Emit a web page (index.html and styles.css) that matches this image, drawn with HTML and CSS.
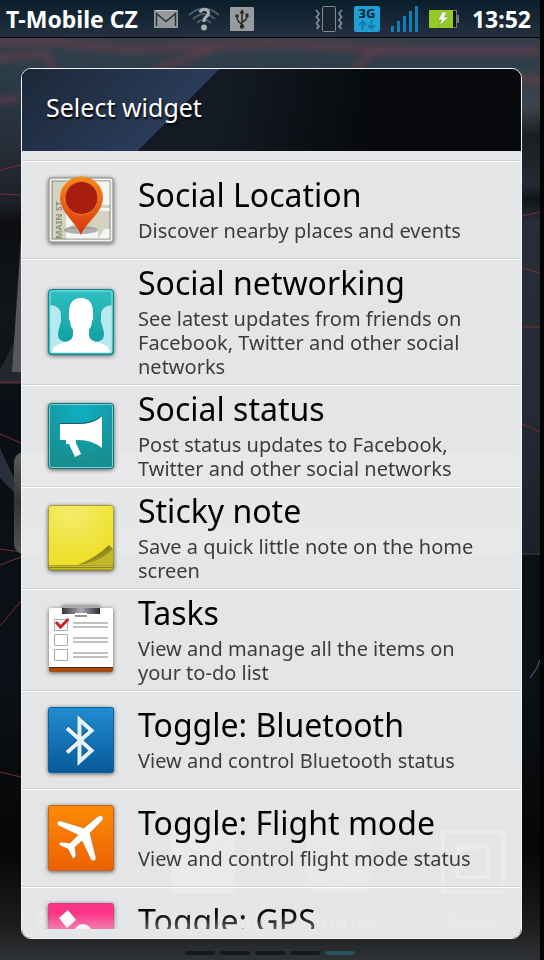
FILE: index.html
```html
<!DOCTYPE html>
<html lang="en">
<head>
    <meta charset="UTF-8">
    <meta name="viewport" content="width=device-width, initial-scale=1">
    <title>Select widget</title>
    <link rel="stylesheet" href="styles.css">
</head>
<body>
    <div class="screen">
        <!-- wallpaper -->
        <svg class="wallpaper" viewBox="0 0 540 922" preserveAspectRatio="none" aria-hidden="true">
            <defs>
                <linearGradient id="sky" x1="0" y1="0" x2="0" y2="1">
                    <stop offset="0" stop-color="#36404c"/>
                    <stop offset=".04" stop-color="#2b3c49"/>
                    <stop offset=".13" stop-color="#252b35"/>
                    <stop offset=".18" stop-color="#1b1f26"/>
                    <stop offset=".2" stop-color="#0c0e11"/>
                    <stop offset=".3" stop-color="#12161b"/>
                    <stop offset=".4" stop-color="#0b1016"/>
                    <stop offset=".7" stop-color="#0c1117"/>
                    <stop offset=".88" stop-color="#060606"/>
                    <stop offset=".96" stop-color="#1a1b1c"/>
                    <stop offset="1" stop-color="#303336"/>
                </linearGradient>
                <linearGradient id="side" x1="0" y1="0" x2="0" y2="1">
                    <stop offset="0" stop-color="#343f4a"/>
                    <stop offset=".08" stop-color="#3c434b"/>
                    <stop offset=".14" stop-color="#1a1e24"/>
                    <stop offset=".24" stop-color="#242a32"/>
                    <stop offset=".27" stop-color="#11151a"/>
                    <stop offset=".32" stop-color="#282e37"/>
                    <stop offset=".7" stop-color="#242b34"/>
                    <stop offset="1" stop-color="#1a2027"/>
                </linearGradient>
                <linearGradient id="card" x1="0" y1="0" x2="0" y2="1">
                    <stop offset="0" stop-color="#5c5c5c"/>
                    <stop offset=".5" stop-color="#333"/>
                    <stop offset="1" stop-color="#555"/>
                </linearGradient>
                <filter id="soft"><feGaussianBlur stdDeviation="3"/></filter>
            </defs>
            <rect width="540" height="922" fill="url(#sky)"/>
            <rect x="510" y="30" width="30" height="486" fill="url(#side)"/>
            <g filter="url(#soft)" fill="none" stroke="#713c48" stroke-width="7" opacity=".6">
                <path d="M-10 4H60L130 12L270 5L400 13H550"/>
                <path d="M-10 22L45 16L55 34M150 34L220 8M350 36L370 16L405 10M520 42H550M-10 64L20 60"/>
            </g>
            <path d="M0 332L21 290V346H0z" fill="#24282e"/>
            <path d="M12 334L21 200V334z" fill="#55585c"/>
            <path d="M0 410Q14 442 21 450V462L0 440z" fill="#27303b"/>
            <g fill="none" stroke="#762d33" stroke-width="1">
                <path d="M0 132L21 127M0 156L21 157M0 344H21M0 396L21 405M0 511L21 514M0 527L21 519M0 588L21 563M0 734L21 739"/>
                <path d="M522 178L540 174M522 230L540 235M522 289H540M522 386L540 394"/>
            </g>
            <rect x="14" y="414" width="506" height="102" rx="10" fill="url(#card)"/>
            <path d="M522 516H540" stroke="#3b4249"/>
            <path d="M530 640Q538 630 540 622" stroke="#667" fill="none"/>
        </svg>

        <!-- shortcuts under the dialog -->
        <div class="dock" aria-hidden="true">
            <div class="shortcut">
                <svg width="64" height="64" viewBox="0 0 64 64"></svg>
                <span>Phone</span>
            </div>
            <div class="shortcut">
                <svg width="64" height="64" viewBox="0 0 64 64">
                    <rect width="64" height="64" fill="#777"/>
                    <path d="M4 6L32 30L60 6" fill="none" stroke="#444" stroke-width="3"/>
                </svg>
                <span>Messaging</span>
            </div>
            <div class="shortcut">
                <svg width="64" height="64" viewBox="0 0 64 64">
                    <rect width="64" height="64" fill="#555"/>
                    <circle cx="32" cy="32" r="18" fill="none" stroke="#333" stroke-width="6"/>
                </svg>
                <span>Settings</span>
            </div>
            <div class="shortcut">
                <svg width="64" height="64" viewBox="0 0 64 64">
                    <path d="M2 2H62V62H2zM17 17H47V47H17z" fill="none" stroke="#999" stroke-width="4"/>
                </svg>
                <span>Apps</span>
            </div>
        </div>

        <header class="status-bar">
            <span class="carrier">T-Mobile CZ</span>
            <div class="icons left">
                <svg width="24" height="18" viewBox="0 0 24 18" role="img" aria-label="Mail">
                    <rect width="24" height="18" fill="#96989a"/>
                    <path d="M2.500 16V3.500L12 11.500L21.500 3.500V16" fill="none" stroke="#26313d" stroke-width="1.500"/>
                    <path d="M2 .5H22" stroke="#c9cacb"/>
                </svg>
                <svg width="32" height="24" viewBox="0 0 32 24" role="img" aria-label="Wi-Fi">
                    <g fill="none" stroke="#4f5b66" stroke-width="2">
                        <path d="M1 8Q16-5 31 8"/>
                        <path d="M5 12Q16 2 27 12"/>
                        <path d="M9 16Q16 9 23 16"/>
                    </g>
                    <path d="M12 5.500Q13 2.500 16.500 2.500Q20.500 2.500 20.500 6Q20.500 8.500 18 10Q16 11.500 16 15" fill="none" stroke="#aaaeb2" stroke-width="3"/>
                    <circle cx="16" cy="20.500" r="3" fill="#aaaeb2"/>
                </svg>
                <svg width="24" height="24" viewBox="0 0 24 24" role="img" aria-label="USB">
                    <rect width="24" height="24" rx="1" fill="#989a9b"/>
                    <path d="M12 5V20M12 17Q7 15 7 9.500M12 15Q17 13 17 9" fill="none" stroke="#27292b" stroke-width="1.500"/>
                    <path d="M12 2L14.500 6.500H9.500z" fill="#27292b"/>
                    <circle cx="7" cy="9" r="1.800" fill="#27292b"/>
                    <rect x="15.500" y="6.500" width="3" height="3.500" fill="#27292b"/>
                    <circle cx="12" cy="19.500" r="2.200" fill="#27292b"/>
                </svg>
            </div>
            <div class="icons">
                <svg width="28" height="26" viewBox="0 0 28 26" role="img" aria-label="Vibrate">
                    <rect x="7.500" y=".5" width="13" height="25" rx="1" fill="#1a2532" stroke="#85888c"/>
                    <path d="M1 4L4 7.500L1.500 11L4 14L1.500 17.500L4 20.500L1.500 23M27 4L24 7.500L26.500 11L24 14L26.500 17.500L24 20.500L26.500 23" fill="none" stroke="#85888c" stroke-width="1.800"/>
                </svg>
                <div class="data">
                    <span>3G</span>
                    <svg width="18" height="10" viewBox="0 0 18 10" aria-hidden="true">
                        <path d="M4.500 10V2M1 5L4.500 1.500L8 5M13.500 0V8M10 5L13.500 8.500L17 5" fill="none" stroke="#167aa8" stroke-width="2"/>
                    </svg>
                </div>
                <svg width="27" height="26" viewBox="0 0 27 26" role="img" aria-label="Signal">
                    <path d="M0 20H3V26H0zM6 15H9V26H6zM12 10H15V26H12zM18 5H21V26H18zM24 0H27V26H24z" fill="#147db8"/>
                </svg>
                <svg width="30" height="18" viewBox="0 0 30 18" role="img" aria-label="Charging">
                    <rect x="23.500" y=".5" width="4" height="17" fill="#16110f" stroke="#777"/>
                    <rect x="28" y="5" width="2" height="8" fill="#777"/>
                    <rect width="24" height="18" rx="1" fill="#94cb27"/>
                    <path d="M13 2H18L15.500 7H20L10 16L12.500 10H9z" fill="#f4f7e6" stroke="#5c8a1c" stroke-width=".5"/>
                </svg>
            </div>
            <time class="clock">13:52</time>
        </header>

        <main class="dialog">
            <h1 class="dialog-title">Select widget</h1>
            <div class="list-wrap">
                <ul class="widget-list">
                    <li>
                        <button class="widget" type="button">
                            <svg class="icon" viewBox="0 0 66 66" aria-hidden="true">
                                <defs>
                                    <linearGradient id="pin" x1="0" y1="0" x2="0" y2="1">
                                        <stop offset="0" stop-color="#f88b18"/>
                                        <stop offset="1" stop-color="#d9330c"/>
                                    </linearGradient>
                                </defs>
                                <rect x="1" y="1" width="64" height="64" rx="3" fill="#f4f4f2" stroke="#a4a4a0" stroke-width="1.500"/>
                                <rect x="4" y="4" width="58" height="58" fill="#d3d3c0" stroke="#86867c"/>
                                <path d="M18 52L29 45V4.500H18zM18 52H50V61.500H18zM42 4.500H61.500V28H42zM42 31H61.500V34H42zM50 61.500L56 52H61.500V61.500z" fill="#f5f5f3"/>
                                <text class="map-street" transform="translate(14 62) rotate(-90)">MAIN ST.</text>
                                <ellipse cx="33" cy="53" rx="17" ry="4" fill="#777" opacity=".55"/>
                                <path d="M33 58C29 46 12 36 12 20.500A21.500 21 0 0 1 55 20.500C55 36 37 46 33 58z" fill="url(#pin)"/>
                                <circle cx="33.500" cy="21" r="16.500" fill="#a81e0e" stroke="#ee7830"/>
                            </svg>
                            <span class="text">
                                <span class="name">Social Location</span>
                                <span class="desc">Discover nearby places and events</span>
                            </span>
                        </button>
                    </li>
                    <li>
                        <button class="widget" type="button">
                            <svg class="icon" viewBox="0 0 66 66" aria-hidden="true">
                                <defs>
                                    <linearGradient id="teal" x1="0" y1="0" x2="0" y2="1">
                                        <stop offset="0" stop-color="#2fc0c2"/>
                                        <stop offset="1" stop-color="#0b999c"/>
                                    </linearGradient>
                                </defs>
                                <rect x=".5" y=".5" width="65" height="65" rx="3" fill="url(#teal)" stroke="#16888b"/>
                                <path d="M2 16Q13 17 13 26V33Q10 41 10 46Q10 53 20 53L33 64H2zM64 16Q53 17 53 26V33Q56 41 56 46Q56 53 46 53L33 64H64z" fill="#b7e9ef"/>
                                <path d="M4 64Q5 56 14 54Q25 52 25 46V41Q22 37 22 32Q20 30 21 27Q20 9 33 9Q46 9 45 27Q46 30 44 32Q44 37 41 41V46Q41 52 52 54Q61 56 62 64z" fill="#fff"/>
                                <rect x="2" y="2" width="62" height="62" rx="2" fill="none" stroke="#7de0e2"/>
                            </svg>
                            <span class="text">
                                <span class="name">Social networking</span>
                                <span class="desc">See latest updates from friends on Facebook, Twitter and other social networks</span>
                            </span>
                        </button>
                    </li>
                    <li>
                        <button class="widget" type="button">
                            <svg class="icon" viewBox="0 0 66 66" aria-hidden="true">
                                <defs>
                                    <radialGradient id="status" cx=".5" cy=".1" r=".8">
                                        <stop offset="0" stop-color="#0eafc4"/>
                                        <stop offset="1" stop-color="#178f91"/>
                                    </radialGradient>
                                </defs>
                                <rect x=".5" y=".5" width="65" height="65" rx="3" fill="url(#status)" stroke="#167678"/>
                                <rect x="1.500" y="1.500" width="63" height="63" rx="2" fill="none" stroke="#7fcfd0"/>
                                <path d="M12 21H30Q46 21 54 13V45Q43 36 28 37V40L33 51L27 54L21 41H18V37H12z" fill="#fff"/>
                                <path d="M12 20.500H30Q46 20.500 54 12.500" fill="none" stroke="#145c60"/>
                            </svg>
                            <span class="text">
                                <span class="name">Social status</span>
                                <span class="desc">Post status updates to Facebook, Twitter and other social networks</span>
                            </span>
                        </button>
                    </li>
                    <li>
                        <button class="widget" type="button">
                            <svg class="icon" viewBox="0 0 66 66" aria-hidden="true">
                                <defs>
                                    <radialGradient id="note" cx=".35" cy=".1" r=".8">
                                        <stop offset="0" stop-color="#f4ec6c"/>
                                        <stop offset="1" stop-color="#eee02c"/>
                                    </radialGradient>
                                    <linearGradient id="curl" x1="0" y1="0" x2="1" y2="1">
                                        <stop offset=".3" stop-color="#6d6912"/>
                                        <stop offset=".7" stop-color="#a89f22"/>
                                    </linearGradient>
                                </defs>
                                <rect x=".5" y="4" width="65" height="61" rx="3" fill="#c9bd22" stroke="#8a8424"/>
                                <path d="M1 62.500H65" stroke="#8c851b"/>
                                <rect x=".5" y=".5" width="65" height="60" rx="3" fill="#c2b82a" stroke="#a59d3c"/>
                                <path d="M3 1H63Q65 1 65 3V44Q52 54 30 60H1V3Q1 1 3 1z" fill="url(#note)"/>
                                <path d="M30 60Q49 52 61 40L65 44Q54 56 30 60z" fill="url(#curl)"/>
                            </svg>
                            <span class="text">
                                <span class="name">Sticky note</span>
                                <span class="desc">Save a quick little note on the home screen</span>
                            </span>
                        </button>
                    </li>
                    <li>
                        <button class="widget" type="button">
                            <svg class="icon" viewBox="0 0 66 66" aria-hidden="true">
                                <defs>
                                    <linearGradient id="clip" x1="0" y1="0" x2="1" y2="0">
                                        <stop offset="0" stop-color="#33343a"/>
                                        <stop offset=".5" stop-color="#a9aab2"/>
                                        <stop offset="1" stop-color="#2c2d33"/>
                                    </linearGradient>
                                </defs>
                                <rect x="1" y="50" width="64" height="15" rx="2" fill="#a9480f"/>
                                <path d="M3 1H63Q65 1 65 3V60H1V3Q1 1 3 1z" fill="#fff"/>
                                <path d="M1 60.500H65" stroke="#4b2412"/>
                                <rect x="14" y="-2" width="38" height="3" fill="#aaa"/>
                                <path d="M14 1H52V7H14z" fill="url(#clip)"/>
                                <path d="M27 6H39V9H27z" fill="#fff"/>
                                <path d="M27 9H39" stroke="#222"/>
                                <path d="M6.500 12.500H19.500V23.500H6.500zM6.500 27.500H19.500V38.500H6.500zM6.500 42.500H19.500V53.500H6.500z" fill="none" stroke="#aaa"/>
                                <path d="M25 16H60M25 20H60M25 31H60M25 35H60M25 46H60M25 50H60" stroke="#aaa" stroke-width="1.500"/>
                                <path d="M8 15L12.500 20L20.500 12" fill="none" stroke="#cc2029" stroke-width="3"/>
                            </svg>
                            <span class="text">
                                <span class="name">Tasks</span>
                                <span class="desc">View and manage all the items on your to-do list</span>
                            </span>
                        </button>
                    </li>
                    <li>
                        <button class="widget" type="button">
                            <svg class="icon" viewBox="0 0 66 66" aria-hidden="true">
                                <defs>
                                    <linearGradient id="blue" x1="0" y1="0" x2="0" y2="1">
                                        <stop offset="0" stop-color="#218cd0"/>
                                        <stop offset="1" stop-color="#075a9b"/>
                                    </linearGradient>
                                </defs>
                                <rect x=".5" y=".5" width="65" height="65" rx="2" fill="url(#blue)" stroke="#0f609d"/>
                                <path d="M19 20L43 42.500L31.500 54V12L43 22.500L19 44.500" fill="none" stroke="#124a7c" stroke-width="4"/>
                                <path d="M19 21L43.500 43.500L31.500 54.500V12.500L43.500 23.500L19 45.500" fill="none" stroke="#e6f3fc" stroke-width="4"/>
                            </svg>
                            <span class="text">
                                <span class="name">Toggle: Bluetooth</span>
                                <span class="desc">View and control Bluetooth status</span>
                            </span>
                        </button>
                    </li>
                    <li>
                        <button class="widget" type="button">
                            <svg class="icon" viewBox="0 0 66 66" aria-hidden="true">
                                <defs>
                                    <linearGradient id="orange" x1="0" y1="0" x2="0" y2="1">
                                        <stop offset="0" stop-color="#fd8b06"/>
                                        <stop offset="1" stop-color="#ec6104"/>
                                    </linearGradient>
                                </defs>
                                <rect x=".5" y=".5" width="65" height="65" rx="2" fill="url(#orange)" stroke="#c4661e"/>
                                <path d="M9 18Q10 15 13 16L36 23L49 12Q53 9 55 12Q56 14 53 17L42 28L48 53Q48 56 45 56L43 55L34 36L27 42L28 51L25 54L20 44L11 40L12 37L22 38L30 30L11 21Q9 20 9 18z" fill="#fff" stroke="#c45a0c" stroke-width=".5"/>
                            </svg>
                            <span class="text">
                                <span class="name">Toggle: Flight mode</span>
                                <span class="desc">View and control flight mode status</span>
                            </span>
                        </button>
                    </li>
                    <li>
                        <button class="widget" type="button">
                            <svg class="icon" viewBox="0 0 66 66" aria-hidden="true">
                                <rect x=".5" y=".5" width="65" height="65" rx="2" fill="#fb3488" stroke="#d04080"/>
                                <path d="M11 15L20 7L28 17L19 25z" fill="#fff"/>
                                <circle cx="35" cy="30" r="9" fill="#fff"/>
                                <path d="M42 44L51 36L59 46L50 54z" fill="#fff"/>
                            </svg>
                            <span class="text">
                                <span class="name">Toggle: GPS</span>
                                <span class="desc"></span>
                            </span>
                        </button>
                    </li>
                </ul>
            </div>
        </main>

        <!-- home screen pages -->
        <div class="pages">
            <span class="page"></span>
            <span class="page"></span>
            <span class="page"></span>
            <span class="page"></span>
            <span class="page active"></span>
        </div>
    </div>
</body>
</html>
```
FILE: styles.css
```css
*{
    box-sizing: border-box;
}
body{
    margin: 0;
    background-color: #000;
    font-family: "Noto Sans", "Open Sans", sans-serif;
}
.screen{
    position: relative;
    height: 100vh;
    margin-right: 4px;
    display: flex;
    flex-direction: column;
}
.wallpaper{
    position: absolute;
    top: 38px;
    left: 0;
    width: 100%;
    height: calc(100% - 38px);
}
.dock{
    position: absolute;
    left: 0;
    right: 0;
    bottom: 24px;
    display: grid;
    grid-template-columns: repeat(4, 1fr);
}
.shortcut{
    display: flex;
    flex-direction: column;
    align-items: center;
    gap: 8px;
    color: #777;
    font-size: 22px;
    line-height: 34px;
}
.status-bar{
    position: relative;
    height: 38px;
    flex: none;
    display: flex;
    align-items: center;
    padding: 0 9px 0 6px;
    color: #fff;
    font-size: 23px;
    font-weight: bold;
    background-image: linear-gradient(#081e2b, #253040);
    border-bottom: 1px solid #000;
}
.icons{
    display: flex;
    align-items: center;
    gap: 11px;
    margin-right: 13px;
}
.icons.left{
    margin-left: 16px;
    margin-right: auto;
    gap: 10px;
}
.data{
    width: 26px;
    height: 26px;
    display: flex;
    flex-direction: column;
    align-items: center;
    border-radius: 2px;
    color: #082433;
    font-size: 13px;
    line-height: 14px;
    background-color: #1fa0d4;
}
.dialog{
    position: relative;
    flex: 1;
    min-height: 0;
    display: flex;
    flex-direction: column;
    margin: 30px 18px 0 21px;
    border: 1px solid #f4f4f4;
    border-radius: 10px;
    overflow: hidden;
}
.dialog-title{
    flex: none;
    height: 82px;
    margin: 0;
    padding: 0 24px;
    color: #fff;
    font-size: 25px;
    font-weight: normal;
    line-height: 76px;
    text-shadow: 1px 2px 2px #000;
    background-image:
        linear-gradient(135deg, #1c2838 0, #2a3c5a 140px, transparent 140px),
        linear-gradient(100deg, #141b24 40%, #07090c 70%);
}
.list-wrap{
    flex: 1;
    min-height: 0;
    padding-bottom: 9px;
    background-color: rgba(237, 238, 239, .96);
}
.widget-list{
    height: 100%;
    margin: 0;
    padding: 9px 0 0;
    list-style: none;
    overflow-y: auto;
    scrollbar-width: none;
    mask-image: linear-gradient(#000 calc(100% - 16px), rgba(0, 0, 0, .6));
}
.widget-list li{
    border-top: 1px solid #d2d2d2;
}
.widget{
    width: 100%;
    min-height: 97px;
    display: flex;
    align-items: center;
    gap: 24px;
    padding: 0 40px 0 26px;
    border: 0;
    border-top: 1px solid #fff;
    background: none;
    font-family: inherit;
    text-align: left;
}
.icon{
    flex: none;
    width: 66px;
    height: 66px;
    overflow: visible;
    filter: drop-shadow(0 1px 2px rgba(0, 0, 0, .6));
}
.map-street{
    font-size: 9px;
    font-weight: bold;
    fill: #8f8f80;
}
.name, .desc{
    display: block;
}
.name{
    color: #000;
    font-size: 32px;
    line-height: 46px;
}
.desc{
    min-height: 30px;
    padding: 1px 0 5px;
    color: #3c3c3c;
    font-size: 20px;
    line-height: 24px;
}
.pages{
    position: relative;
    flex: none;
    height: 21px;
    display: flex;
    align-items: center;
    justify-content: center;
    gap: 5px;
    padding-top: 6px;
}
.page{
    width: 30px;
    height: 4px;
    border-radius: 2px;
    background-color: #15191c;
}
.page.active{
    background-color: #28525b;
}
```
